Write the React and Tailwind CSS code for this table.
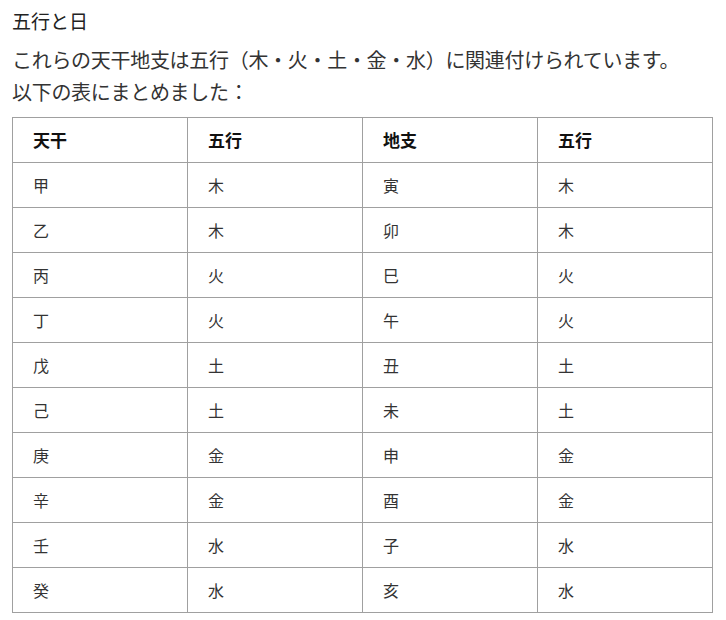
import React from 'react';

const rows = [
  ['甲', '木', '寅', '木'],
  ['乙', '木', '卯', '木'],
  ['丙', '火', '巳', '火'],
  ['丁', '火', '午', '火'],
  ['戊', '土', '丑', '土'],
  ['己', '土', '未', '土'],
  ['庚', '金', '申', '金'],
  ['辛', '金', '酉', '金'],
  ['壬', '水', '子', '水'],
  ['癸', '水', '亥', '水'],
];

const headers = ['天干', '五行', '地支', '五行'];

const App = () => {
  return (
    <div className="min-h-screen bg-white px-3 pt-2 text-[#333] font-['Noto_Sans_CJK_JP','Noto_Sans',sans-serif]">
      <h2 className="text-[19px] leading-[26px] text-[#222] font-normal">五行と日</h2>

      <p className="mt-[10px] text-[20px] leading-[32px] tracking-[-0.3px]">
        これらの天干地支は五行（木・火・土・金・水）に関連付けられています。
        <br />
        以下の表にまとめました：
      </p>

      <table className="mt-[9px] w-[701px] table-fixed border-collapse text-[16px]">
        <thead>
          <tr>
            {headers.map((h, i) => (
              <th
                key={i}
                className="h-[45px] border border-[#a0a0a0] pl-5 text-left font-bold text-[17px] text-[#111]"
              >
                {h}
              </th>
            ))}
          </tr>
        </thead>
        <tbody>
          {rows.map((r, i) => (
            <tr key={i}>
              {r.map((c, j) => (
                <td key={j} className="h-[45px] border border-[#a0a0a0] pl-5 text-[#333]">
                  {c}
                </td>
              ))}
            </tr>
          ))}
        </tbody>
      </table>
    </div>
  );
};

export default App;
